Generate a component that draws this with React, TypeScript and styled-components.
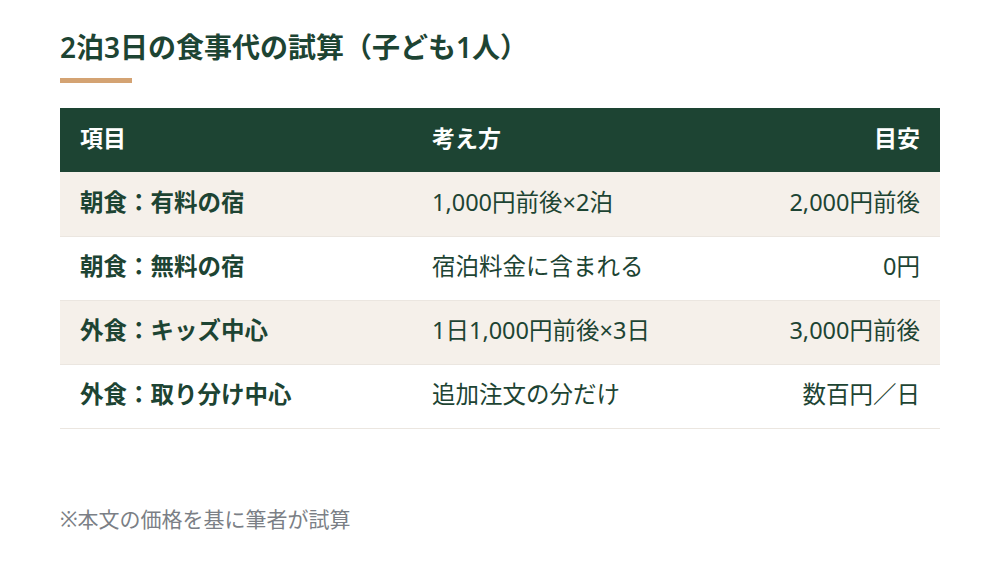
import React from "react";
import styled, { createGlobalStyle } from "styled-components";

const GlobalStyle = createGlobalStyle`
  body {
    margin: 0;
    background: #ffffff;
    font-family: "Noto Sans", "Noto Sans CJK JP", sans-serif;
  }
`;

const rows = [
  { item: "朝食：有料の宿", idea: "1,000円前後×2泊", cost: "2,000円前後" },
  { item: "朝食：無料の宿", idea: "宿泊料金に含まれる", cost: "0円" },
  { item: "外食：キッズ中心", idea: "1日1,000円前後×3日", cost: "3,000円前後" },
  { item: "外食：取り分け中心", idea: "追加注文の分だけ", cost: "数百円／日" },
];

function App() {
  return (
    <>
      <GlobalStyle />
      <Page>
        <Title>2泊3日の食事代の試算（子ども1人）</Title>
        <Accent />
        <Table>
          <colgroup>
            <col style={{ width: "40%" }} />
            <col style={{ width: "30%" }} />
            <col style={{ width: "30%" }} />
          </colgroup>
          <thead>
            <tr>
              <Th>項目</Th>
              <Th>考え方</Th>
              <Th $right>目安</Th>
            </tr>
          </thead>
          <tbody>
            {rows.map((r, i) => (
              <Row key={r.item} $odd={i % 2 === 0}>
                <Td $bold>{r.item}</Td>
                <Td>{r.idea}</Td>
                <Td $right>{r.cost}</Td>
              </Row>
            ))}
          </tbody>
        </Table>
        <Note>※本文の価格を基に筆者が試算</Note>
      </Page>
    </>
  );
}

export default App;

const Page = styled.div`
  padding: 28px 60px 0;
  color: #1d4433;
`;

const Title = styled.h2`
  margin: 0;
  font-size: 28px;
  line-height: 39px;
  font-weight: 600;
  color: #1d4433;
`;

const Accent = styled.div`
  width: 72px;
  height: 5px;
  margin-top: 11px;
  background: #d4a373;
`;

const Table = styled.table`
  width: 100%;
  margin-top: 25px;
  border-collapse: collapse;
  table-layout: fixed;
`;

const Th = styled.th<{ $right?: boolean }>`
  box-sizing: border-box;
  height: 64px;
  padding: 0 20px 4px;
  background: #1d4433;
  color: #ffffff;
  font-size: 23px;
  line-height: 30px;
  font-weight: 700;
  text-align: ${(p) => (p.$right ? "right" : "left")};
`;

const Row = styled.tr<{ $odd: boolean }>`
  background: ${(p) => (p.$odd ? "#f5f0ea" : "#ffffff")};
  border-bottom: 1px solid #ebe6e0;
`;

const Td = styled.td<{ $right?: boolean; $bold?: boolean }>`
  box-sizing: border-box;
  height: 64px;
  padding: 0 20px 4px;
  font-size: 23.5px;
  line-height: 30px;
  font-weight: ${(p) => (p.$bold ? 700 : 400)};
  color: #1d4433;
  text-align: ${(p) => (p.$right ? "right" : "left")};
  white-space: nowrap;
`;

const Note = styled.p`
  margin: 75px 0 0;
  font-size: 21px;
  line-height: 30px;
  color: #7b7f86;
`;
